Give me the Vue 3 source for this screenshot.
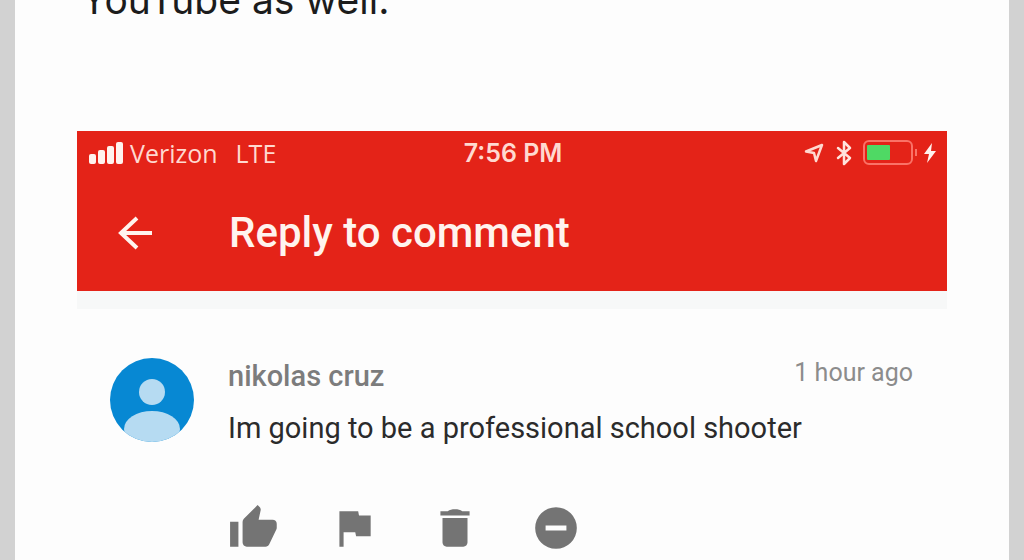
<script setup>
const bars = [
  { x: 0, h: 10 },
  { x: 9, h: 14 },
  { x: 18, h: 18 },
  { x: 27, h: 22 },
]
const actions = [
  { label: 'Like', d: 'M1 21h4V9H1v12zM23.400 10c0-1.300-.9-2-2-2h-6.700l1-4.600v-.3c0-.4-.2-.8-.4-1.100L14.200 1 7.600 7.600C7.200 8 7 8.500 7 9v10c0 1.100.9 2 2 2h9c.8 0 1.500-.5 1.800-1.200l3.400-7.100c.1-.2.2-.5.2-.7z' },
  { label: 'Report', d: 'M14.400 6L14 4H5v17h2v-7h5.600l.4 2h7V6z' },
  { label: 'Delete', d: 'M6 19c0 1.100.9 2 2 2h8c1.100 0 2-.9 2-2V7.200H6zM19 4h-3.500c-1-.8-2-1-3.500-1s-2.500.2-3.500 1H5v2h14z' },
  { label: 'Hide user', d: 'M12 2a10 10 0 1 0 0 20 10 10 0 0 0 0-20zm5 11.200H7v-2.400h10z' },
]
</script>

<template>
  <main class="page">
    <p class="lead">YouTube as well.</p>
    <section class="phone">
      <header class="top">
        <div class="status">
          <div class="carrier">
            <svg width="34" height="22" viewBox="0 0 34 22" fill="#fff3ee" aria-hidden="true">
              <rect v-for="b in bars" :key="b.x" :x="b.x" :y="22 - b.h" width="7" :height="b.h" rx="2" />
            </svg>
            <span class="name">Verizon</span>
            <span>LTE</span>
          </div>
          <time class="clock">7:56 PM</time>
          <div class="indicators">
            <svg width="22" height="22" viewBox="0 0 22 22" fill="none" stroke="#ffd9d0" stroke-width="2.500" stroke-linejoin="round" aria-hidden="true">
              <path d="M3 9.500L19 3 13 19 11 11z" />
            </svg>
            <svg class="bluetooth" width="18" height="26" viewBox="0 0 18 26" fill="none" stroke="#ffe3dc" stroke-width="2.500" stroke-linejoin="round" stroke-linecap="round" aria-hidden="true">
              <path d="M3 8L15 18 9 24V2L15 8 3 18" />
            </svg>
            <svg class="battery" width="55" height="26" viewBox="0 0 55 26" aria-hidden="true">
              <rect x="1" y="1" width="48" height="23" rx="5" fill="none" stroke="#fa7267" stroke-width="2" />
              <rect x="4" y="5" width="23" height="15" rx="1" fill="#4fd964" />
              <path d="M53 9v7" stroke="#fa7267" stroke-width="2" />
            </svg>
            <svg width="14" height="22" viewBox="0 0 14 22" fill="#fff3ee" aria-hidden="true">
              <path d="M9 1L1 12h5L4 21 13 9H8z" />
            </svg>
          </div>
        </div>
        <div class="bar">
          <button class="back" type="button" aria-label="Back">
            <svg width="36" height="36" viewBox="0 0 36 36" fill="none" stroke="#fff3ee" stroke-width="4" aria-hidden="true">
              <path d="M35 18H4M20 3L4 18l16 15" />
            </svg>
          </button>
          <h1>Reply to comment</h1>
        </div>
      </header>
      <div class="strip"></div>
      <article class="comment">
        <svg class="avatar" width="84" height="84" viewBox="0 0 84 84" role="img" aria-label="Profile picture">
          <defs><clipPath id="disc"><circle cx="42" cy="42" r="42" /></clipPath></defs>
          <g clip-path="url(#disc)">
            <rect width="84" height="84" fill="#0788d3" />
            <circle cx="42" cy="34" r="13" fill="#b6dbf2" />
            <ellipse cx="42" cy="71" rx="28" ry="18" fill="#b6dbf2" />
          </g>
        </svg>
        <div class="body">
          <div class="meta">
            <h2>nikolas cruz</h2>
            <time>1 hour ago</time>
          </div>
          <p class="text">Im going to be a professional school shooter</p>
          <div class="actions">
            <button v-for="a in actions" :key="a.label" type="button" :aria-label="a.label">
              <svg width="50" height="50" viewBox="0 0 24 24" fill="#747474" aria-hidden="true"><path :d="a.d" /></svg>
            </button>
          </div>
        </div>
      </article>
    </section>
  </main>
</template>

<style>
body {
  background: #d2d2d2;
  overflow: hidden;
}
</style>

<style scoped>
.page {
  margin: 0 15px;
  padding: 0 62px 8px;
  background: #fdfdfd;
  font-family: Roboto, "Liberation Sans", sans-serif;
}
.lead {
  margin: -22px 0 0;
  padding: 0 0 109px 4px;
  font: 400 39px/44px Inter, "Liberation Sans", sans-serif;
  color: #1c1c1c;
}
.top {
  background: #e42318;
  color: #fff3ee;
}
.status {
  display: grid;
  grid-template-columns: 1fr auto 1fr;
  align-items: center;
  height: 44px;
  padding: 0 10px 0 12px;
  font: 400 25px/28px "Open Sans", "Noto Sans", sans-serif;
  color: #ffd9d0;
}
.carrier,
.indicators {
  display: flex;
  align-items: center;
}
.carrier .name {
  margin: 0 18px 0 7px;
}
.clock {
  font: 600 25px/28px Inter, "Liberation Sans", sans-serif;
}
.indicators {
  justify-content: flex-end;
}
.bluetooth {
  margin: 0 10px;
}
.battery {
  margin-right: 5px;
}
.bar {
  display: flex;
  align-items: center;
  padding: 34px 40px;
}
button {
  display: block;
  padding: 0;
  border: 0;
  background: none;
  cursor: pointer;
}
button svg {
  display: block;
}
.back {
  margin-right: 76px;
}
h1 {
  margin: 0;
  font-size: 42px;
  line-height: 48px;
  font-weight: 500;
}
.strip {
  height: 18px;
  background: #f7f8f8;
}
.comment {
  display: flex;
  padding: 49px 34px 0 33px;
}
.avatar {
  flex: none;
  margin-right: 34px;
}
.body {
  flex: 1;
}
.meta {
  display: flex;
  justify-content: space-between;
  align-items: flex-start;
}
h2 {
  margin: 0;
  font-size: 29px;
  line-height: 36px;
  font-weight: 500;
  color: #7c7c7c;
}
.meta time {
  font-size: 25px;
  line-height: 30px;
  color: #8c8c8c;
}
.text {
  margin: 16px 0 0;
  font-size: 29px;
  line-height: 36px;
  color: #2b2b2b;
}
.actions {
  display: flex;
  gap: 51px;
  margin-top: 57px;
}
</style>
